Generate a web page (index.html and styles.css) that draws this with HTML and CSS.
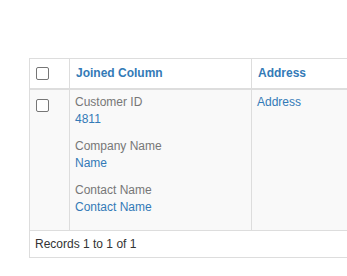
FILE: index.html
```html
<!DOCTYPE html>
<html>
<head>
<meta charset="utf-8">
<link rel="stylesheet" href="styles.css">
</head>
<body>
<div class="wrap">
  <table class="grid">
    <colgroup>
      <col class="c-check">
      <col class="c-joined">
      <col class="c-addr">
    </colgroup>
    <thead>
      <tr>
        <th class="check"><span class="box"></span></th>
        <th>Joined Column</th>
        <th>Address</th>
      </tr>
    </thead>
    <tbody>
      <tr>
        <td class="check"><span class="box"></span></td>
        <td>
          <div class="field">
            <div class="label">Customer ID</div>
            <div class="value">4811</div>
          </div>
          <div class="field">
            <div class="label">Company Name</div>
            <div class="value">Name</div>
          </div>
          <div class="field">
            <div class="label">Contact Name</div>
            <div class="value">Contact Name</div>
          </div>
        </td>
        <td><div class="value">Address</div></td>
      </tr>
    </tbody>
  </table>
  <div class="footer">Records 1 to 1 of 1</div>
</div>
</body>
</html>
```
FILE: styles.css
```css
html, body {
  margin: 0;
  padding: 0;
  background: #fff;
  overflow: hidden;
}
body {
  font-family: "Liberation Sans", Arial, sans-serif;
  font-size: 12px;
  line-height: 17px;
  color: #333;
}
.wrap {
  padding: 58px 0 0 29px;
  width: 420px;
}
.grid {
  border-collapse: collapse;
  width: 420px;
  table-layout: fixed;
}
.c-check { width: 40px; }
.c-joined { width: 182px; }
.c-addr { width: 198px; }
.grid th,
.grid td {
  border: 1px solid #ddd;
  text-align: left;
  vertical-align: top;
}
.grid th {
  height: 29px;
  padding: 0 6px;
  vertical-align: middle;
  font-weight: bold;
  color: #337ab7;
  border-bottom: 2px solid #ddd;
  background: #fff;
}
.grid td {
  background: #f9f9f9;
  padding: 4px 6px 8px 5px;
  height: 128px;
}
.grid th.check { padding: 0 0 0 6px; }
.grid td.check { padding: 9px 0 0 6px; }
.box {
  display: block;
  width: 11px;
  height: 11px;
  border: 1px solid #767676;
  border-radius: 2px;
  background: #fff;
}
.field + .field { margin-top: 10px; }
.label { color: #777; }
.value { color: #337ab7; }
.footer {
  border: 1px solid #ddd;
  border-top: 0;
  height: 26px;
  line-height: 26px;
  padding-left: 5px;
  color: #333;
}
```
